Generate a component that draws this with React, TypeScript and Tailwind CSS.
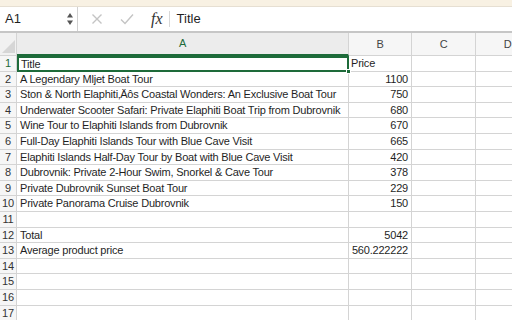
import React from "react";

const rows: [string, string][] = [
  ["Title", "Price"],
  ["A Legendary Mljet Boat Tour", "1100"],
  ["Ston & North Elaphiti‚Äôs Coastal Wonders: An Exclusive Boat Tour", "750"],
  ["Underwater Scooter Safari: Private Elaphiti Boat Trip from Dubrovnik", "680"],
  ["Wine Tour to Elaphiti Islands from Dubrovnik", "670"],
  ["Full-Day Elaphiti Islands Tour with Blue Cave Visit", "665"],
  ["Elaphiti Islands Half-Day Tour by Boat with Blue Cave Visit", "420"],
  ["Dubrovnik: Private 2-Hour Swim, Snorkel & Cave Tour", "378"],
  ["Private Dubrovnik Sunset Boat Tour", "229"],
  ["Private Panorama Cruise Dubrovnik", "150"],
  ["", ""],
  ["Total", "5042"],
  ["Average product price", "560.222222"],
  ["", ""],
  ["", ""],
  ["", ""],
  ["", ""],
];

export default function App() {
  return (
    <div
      className="w-[512px] h-[320px] overflow-hidden bg-white text-[#1f1f1f]"
      style={{ fontFamily: '"Liberation Sans", Arial, sans-serif' }}
    >
      <div className="h-[7px] bg-[#f8f1e3] border-b border-[#e6dfd2]" />
      <div className="h-[26px] flex items-center border-b-2 border-[#c6c6c6] bg-white">
        <div className="w-[78px] shrink-0 h-full flex items-center justify-between pl-[5px] pr-[3px] border-r border-[#d0d0d0]">
          <span className="text-[13px]">A1</span>
          <svg width="8" height="16" viewBox="0 0 8 16">
            <path d="M4 2 L7 6.5 L1 6.5 Z" fill="#555" />
            <path d="M4 14 L7 9.5 L1 9.5 Z" fill="#555" />
          </svg>
        </div>
        <div className="flex items-center h-full">
          <svg width="12" height="12" viewBox="0 0 12 12" className="ml-[13px]">
            <path d="M1.5 1.5 L10.5 10.5 M10.5 1.5 L1.5 10.5" stroke="#c4c4c4" strokeWidth="1.4" />
          </svg>
          <svg width="14" height="12" viewBox="0 0 14 12" className="ml-[17px]">
            <path d="M1 6.5 L5 10.5 L13 1.5" stroke="#c4c4c4" strokeWidth="1.4" fill="none" />
          </svg>
          <span
            className="ml-[17px] text-[16px] italic text-[#333]"
            style={{ fontFamily: '"Liberation Serif", "Times New Roman", serif' }}
          >
            fx
          </span>
          <div className="ml-[6px] w-px h-[16px] bg-[#d8d8d8]" />
          <span className="ml-[7px] text-[13px]">Title</span>
        </div>
      </div>
      <div className="grid grid-cols-[17px_332px_63px_64px_64px] w-[540px] text-[11px] tracking-[-0.2px]">
        <div className="h-[23px] relative bg-[#f1f1f1] border-r border-b border-[#d4d4d4]">
          <svg width="14" height="14" viewBox="0 0 14 14" className="absolute right-[1px] bottom-[2px]">
            <path d="M14 1 L14 14 L1 14 Z" fill="#d6d6d6" />
          </svg>
        </div>
        <div className="h-[23px] flex items-center justify-center bg-[#ececec] text-[#1e6b3a] border-r border-[#d4d4d4] border-b-2 border-b-[#1e6b3a]">
          A
        </div>
        <div className="h-[23px] flex items-center justify-center bg-[#f6f6f6] text-[#444] border-r border-b border-[#d4d4d4]">
          B
        </div>
        <div className="h-[23px] flex items-center justify-center bg-[#f6f6f6] text-[#444] border-r border-b border-[#d4d4d4]">
          C
        </div>
        <div className="h-[23px] flex items-center justify-center bg-[#f6f6f6] text-[#444] border-r border-b border-[#d4d4d4]">
          D
        </div>
        {rows.map(([t, p], i) => {
          const first = i === 0;
          return (
            <React.Fragment key={i}>
              <div
                className={
                  "h-[15.6px] flex items-center justify-center bg-[#f6f6f6] border-r border-b border-[#d4d4d4] " +
                  (first ? "text-[#1e6b3a]" : "text-[#333]")
                }
              >
                {i + 1}
              </div>
              {first ? (
                <div className="h-[15.6px] relative flex items-center pl-[2px] border-2 border-[#1e6b3a] whitespace-nowrap">
                  {t}
                  <div className="absolute -right-[4px] -bottom-[4px] w-[5px] h-[5px] bg-[#1e6b3a] border border-white" />
                </div>
              ) : (
                <div className="h-[15.6px] flex items-center pl-[3px] border-r border-b border-[#d4d4d4] whitespace-nowrap overflow-hidden">
                  {t}
                </div>
              )}
              <div
                className={
                  "h-[15.6px] flex items-center border-r border-b border-[#d4d4d4] whitespace-nowrap " +
                  (first ? "pl-[2px]" : "justify-end pr-[3px]")
                }
              >
                {p}
              </div>
              <div className="h-[15.6px] border-r border-b border-[#d4d4d4]" />
              <div className="h-[15.6px] border-r border-b border-[#d4d4d4]" />
            </React.Fragment>
          );
        })}
      </div>
    </div>
  );
}
